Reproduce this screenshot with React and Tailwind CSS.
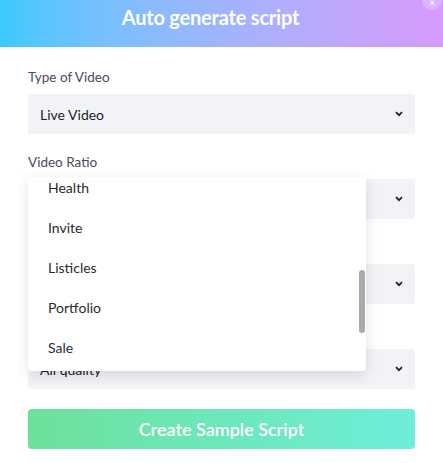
import React from 'react'

const fields = [
  { label: 'Type of Video', value: 'Live Video' },
  { label: 'Video Ratio', value: '16:9' },
  { label: 'Video Category', value: 'Health' },
  { label: 'Video Quality', value: 'All quality' },
]

const options = ['Health', 'Invite', 'Listicles', 'Portfolio', 'Sale']

const Chevron = () => (
  <svg width="8" height="6" viewBox="0 0 8 6" className="shrink-0">
    <path d="M1 1.2 L4 4.2 L7 1.2" fill="none" stroke="#222" strokeWidth="1.8" />
  </svg>
)

const App = () => {
  return (
    <div className="w-[443px] h-[463px] bg-white overflow-hidden relative font-['Lato',sans-serif]">
      <div className="h-[47px] bg-gradient-to-r from-[#3bc9fe] to-[#d69afc] flex items-center justify-center pr-[22px]">
        <h1 className="text-white font-bold text-[20px] leading-none -mt-[14px] tracking-[-0.2px]">
          Auto generate script
        </h1>
      </div>

      {/* close button */}
      <div className="absolute -top-[10px] right-[1px] w-[20px] h-[20px] rounded-full bg-white/25 flex items-end justify-center pb-[3px]">
        <span className="text-white text-[9px] leading-none font-bold">×</span>
      </div>

      <div className="px-[28px] pt-[20px]">
        {fields.map((f, i) => (
          <div key={f.label} className={i > 0 ? 'mt-[18px]' : ''}>
            <div className="text-[13.5px] leading-[20px] text-[#4a4b60]">{f.label}</div>
            <div className="mt-[7px] h-[40px] bg-[#f2f3f7] rounded-[3px] flex items-center justify-between pl-[12px] pr-[12px]">
              <span className="text-[14px] text-[#1e1e24]">{f.value}</span>
              <Chevron />
            </div>
          </div>
        ))}

        <button className="mt-[20px] w-full h-[40px] rounded-[4px] bg-gradient-to-r from-[#6ce19a] to-[#6eeeda] text-white text-[18px] font-semibold">
          Create Sample Script
        </button>
      </div>

      {/* open dropdown */}
      <div className="absolute left-[28px] top-[177px] w-[338px] h-[194px] bg-white rounded-[3px] shadow-[0_4px_14px_rgba(0,0,0,0.12)] overflow-hidden">
        <div className="-mt-[10px]">
          {options.map((o) => (
            <div key={o} className="h-[40px] flex items-center pl-[20px] text-[14px] text-[#2a2a30]">
              {o}
            </div>
          ))}
        </div>
        <div className="absolute right-[1px] top-[93px] w-[6px] h-[63px] rounded-full bg-[#a9a9a9]" />
      </div>
    </div>
  )
}

export default App
